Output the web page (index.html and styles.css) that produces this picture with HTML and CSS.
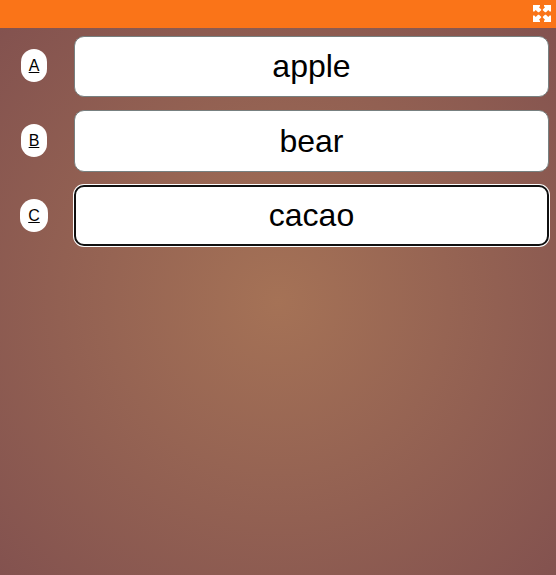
FILE: index.html
```html
<!DOCTYPE html>
<html lang="en">
<head>
<meta charset="utf-8">
<title>Quiz</title>
<link rel="stylesheet" href="styles.css">
</head>
<body>
<header class="bar">
  <svg class="expand" viewBox="0 0 18 17" aria-hidden="true">
    <defs><path id="arrow" d="M0 0H7V1.2L6 2.2L8.2 4.4V5.2L6 7.3H5L2.7 5L1.4 6.5H0Z"/></defs>
    <use href="#arrow"/>
    <use href="#arrow" transform="translate(18 0) scale(-1 1)"/>
    <use href="#arrow" transform="translate(0 17) scale(1 -1)"/>
    <use href="#arrow" transform="translate(18 17) scale(-1 -1)"/>
  </svg>
</header>
<main class="answers">
  <div class="row"><div class="key"><span class="badge">A</span></div><button class="answer">apple</button></div>
  <div class="row"><div class="key"><span class="badge">B</span></div><button class="answer">bear</button></div>
  <div class="row"><div class="key"><span class="badge">C</span></div><button class="answer selected">cacao</button></div>
</main>
</body>
</html>
```
FILE: styles.css
```css
* { box-sizing: border-box; }

body {
  margin: 0;
  height: 575px;
  display: flex;
  flex-direction: column;
  overflow: hidden;
  font-family: "Liberation Sans", Arial, sans-serif;
}

.bar {
  height: 28px;
  flex: none;
  padding: 5px 5.5px 0 0;
  display: flex;
  justify-content: flex-end;
  background: #fa7418;
}

.expand {
  width: 18px;
  height: 17px;
  fill: #fff;
}

.answers {
  flex: 1;
  padding: 7.8px 7px 0 0;
  display: flex;
  flex-direction: column;
  gap: 13.2px;
  background: radial-gradient(circle, #a57256, #83524f);
}

.row {
  display: flex;
  height: 61.4px;
}

.key {
  width: 68px;
  margin-right: 6px;
  flex: none;
  display: flex;
  align-items: center;
  justify-content: center;
  padding-bottom: 1.2px;
}

.badge {
  height: 33px;
  padding: 0 8px;
  border-radius: 16px;
  background: #fff;
  color: #000;
  font-size: 16px;
  line-height: 33px;
  text-decoration: underline;
}

.answer {
  flex: 1;
  padding: 0;
  border: 1px solid #778080;
  border-radius: 10px;
  background: #fff;
  color: #000;
  font: 32px "Liberation Sans", Arial, sans-serif;
}

.selected {
  border: 2px solid #101010;
  box-shadow: 0 0 0 1px #fff;
}
```
